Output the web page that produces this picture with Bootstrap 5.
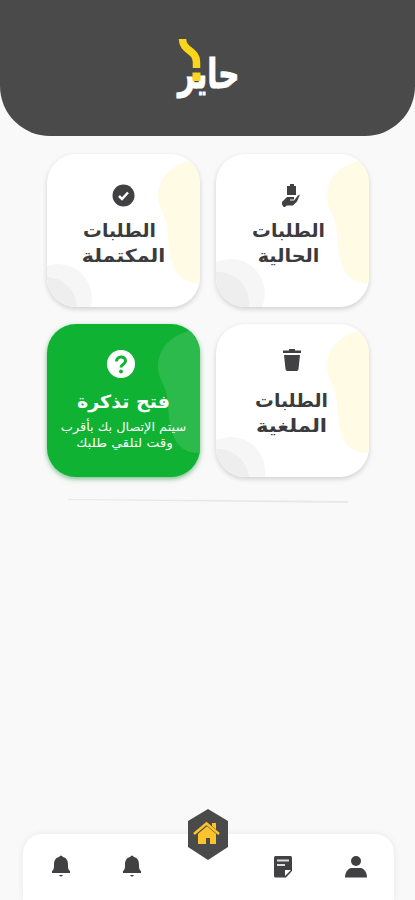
<!DOCTYPE html>
<html lang="ar" dir="rtl">
<head>
<meta charset="utf-8">
<meta name="viewport" content="width=device-width, initial-scale=1">
<title>حاير</title>
<link href="https://cdn.jsdelivr.net/npm/bootstrap@5.3.0/dist/css/bootstrap.min.css" rel="stylesheet">
<style>
body{background:#f9f9f9;color:#3b3b3d;font-family:"DejaVu Sans","Noto Sans",sans-serif;height:900px}
svg{display:block}
.app-top{height:136px;background:#4a4a4a;border-radius:0 0 50px 50px;padding-top:14px}
.tiles{width:322px;display:grid;grid-template-columns:153px 153px;gap:17px 16px;margin-top:18px}
.tile{height:153px;border-radius:29px;background:#fff;overflow:hidden;box-shadow:0 2px 5px rgba(0,0,0,.17)}
.tile-green{background:#0fb233;color:#fff;box-shadow:0 2px 5px rgba(15,140,45,.55)}
.tile-art{inset:0}
.tile-icon{height:64px;padding-top:30px}
.icon-help{padding:26px 4px 0 0;direction:ltr}
.line{display:block;white-space:nowrap;font-weight:700;font-size:18px;line-height:25px}
.sub{font-weight:400;font-size:12px;line-height:16px}
.title-green{line-height:31px;margin:-2px 0 2px}
.w-a{transform:translateX(-4px) scaleX(1.04)}
.w-b{transform:translateX(-4px) scaleX(1.07)}
.w-c{transform:translateX(-4px) scaleX(1.04)}
.w-d{transform:scaleX(1.14)}
.w-e{transform:translateX(-1px) scaleX(1.04)}
.w-f{transform:translateX(-1px) scaleX(1.17)}
.w-g{transform:scaleX(1.06)}
.w-h{transform:scaleX(1.07)}
.w-i{transform:translateX(1px) scaleX(1.13)}
.rule{width:280px;height:5px;margin-top:21px}
.dock{width:371px;height:66px;border-radius:19px 19px 0 0;background:#fff;box-shadow:0 0 7px rgba(0,0,0,.08);padding:0 25px;margin-left:2px}
.dock-item{width:26px;margin-top:21px}
.gap-note{margin-right:47px}
.gap-home{margin-right:41px}
.gap-bell{margin-right:45px}
.dock-home{width:42px;margin-top:-26px}
</style>
<script src="https://cdn.jsdelivr.net/npm/bootstrap@5.3.0/dist/js/bootstrap.bundle.min.js"></script>
</head>
<body class="d-flex flex-column align-items-center overflow-hidden">
<header class="app-top w-100 d-flex justify-content-center">
<svg width="90" height="115" viewBox="163 14 90 115">
<text x="178" y="88" direction="ltr" font-size="41" font-weight="700" fill="#fff" stroke="#fff" stroke-width="1" textLength="61.500" lengthAdjust="spacingAndGlyphs">حاير</text>
<path d="M182.500 39C182.500 51 196.500 50 196.500 62V68" fill="none" stroke="#fbd51c" stroke-width="7.500"/>
<path d="M192 68h9v4.500h-9z" fill="#4a4a4a"/><path d="M192.500 72.500h8v8.500h-8z" fill="#fbd51c"/>
</svg>
</header>
<main class="tiles">
<a class="tile position-relative text-reset text-decoration-none text-center">
<svg class="tile-art position-absolute" width="153" height="153"><path d="M153 6C129 6 111 22 111 42c0 15 9 18 10 38 1 30 8 50 32 49z" fill="#fffbe5"/><circle cx="15" cy="139" r="34" fill="#f6f6f6"/><circle cx="2" cy="149" r="31" fill="#eee"/></svg>
<div class="tile-icon position-relative d-flex justify-content-center"><svg width="22" height="23" viewBox="0 0 22 23" fill="#414143"><path d="M6 2h3V0h4v2h2v9H6zM1 18l5-5h7v2.500H9v1h4l4-5 2-1-3 7-4 4H6l-3 2-2-3z"/></svg></div>
<span class="line w-a">الطلبات</span><span class="line w-b">الحالية</span>
</a>
<a class="tile position-relative text-reset text-decoration-none text-center">
<svg class="tile-art position-absolute" width="153" height="153"><path d="M153 6C129 6 111 22 111 42c0 15 9 18 10 38 1 30 8 50 32 49z" fill="#fffbe5"/><circle cx="11" cy="144" r="34" fill="#f6f6f6"/><circle cx="-1" cy="154" r="31" fill="#eee"/></svg>
<div class="tile-icon position-relative d-flex justify-content-center"><svg width="23" height="23" viewBox="0 0 23 23"><circle cx="11.500" cy="11.500" r="11" fill="#414143"/><path d="m7 12 3 3 6-6.500" fill="none" stroke="#fff" stroke-width="2.500"/></svg></div>
<span class="line w-c">الطلبات</span><span class="line w-d">المكتملة</span>
</a>
<a class="tile position-relative text-reset text-decoration-none text-center">
<svg class="tile-art position-absolute" width="153" height="153"><path d="M153 6C129 6 111 22 111 42c0 15 9 18 10 38 1 30 8 50 32 49z" fill="#fffbe5"/><circle cx="15" cy="147" r="34" fill="#f6f6f6"/><circle cx="2" cy="156" r="31" fill="#eee"/></svg>
<div class="tile-icon position-relative d-flex justify-content-center pt-4"><svg width="20" height="24" viewBox="-1 0 20 24" fill="#414143"><path d="M0 2.500h6V1h6v1.500h6V5H0zM1 7h16l-1.500 14q0 2-2 2h-9q-2 0-2-2z"/></svg></div>
<span class="line w-e">الطلبات</span><span class="line w-f">الملغية</span>
</a>
<a class="tile tile-green position-relative text-decoration-none text-center">
<svg class="tile-art position-absolute" width="153" height="153"><path d="M153 6C129 6 111 22 111 42c0 15 9 18 10 38 1 30 8 50 32 49z" fill="#2bba4b"/></svg>
<div class="tile-icon icon-help position-relative d-flex justify-content-center"><svg width="28" height="28" viewBox="0 0 28 28"><circle cx="14" cy="14" r="14" fill="#fff"/><path d="M9.500 11.500c0-6 9-6 9-.5 0 3.500-4.500 3-4.500 6.500" fill="none" stroke="#0fb233" stroke-width="3"/><circle cx="14" cy="21.500" r="1.900" fill="#0fb233"/></svg></div>
<span class="line title-green w-g">فتح تذكرة</span><span class="line sub w-h">سيتم الإتصال بك بأقرب</span><span class="line sub w-i">وقت لتلقي طلبك</span>
</a>
</main>
<svg class="rule" viewBox="0 0 280 5"><path d="M0 1 280 3v2L0 2z" fill="#e8e8e8"/></svg>
<nav class="dock d-flex mt-auto" aria-label="القائمة">
<a class="dock-item"><svg width="26" height="24" viewBox="0 0 26 24" fill="#414143"><circle cx="13" cy="6" r="5"/><path d="M2 22.500c0-6 4-9.500 6-9.500h10c2 0 6 3.500 6 9.500z"/></svg></a>
<a class="dock-item gap-note"><svg width="26" height="24" viewBox="0 0 26 24"><path d="M5.500 1h15q1.500 0 1.500 1.500V16l-6 6.500H5.500Q4 22.500 4 21V2.500Q4 1 5.500 1z" fill="#414143"/><path d="M7 5.500h12M7 10h8" stroke="#ddd" stroke-width="2.200"/><path d="M15 21v-6h6z" fill="#fff"/></svg></a>
<a class="dock-home gap-home"><svg width="42" height="52" viewBox="0 0 42 52"><path d="M21 1 41 13v26L21 52 1 39V13z" fill="#4a4a4a"/><path d="m20 17 9 8v11h-6v-6h-4v6h-8V25zM25 15h4v8l-4-3z" fill="#fbc42d"/><path d="m7 27 13-11 13 11" fill="none" stroke="#4a4a4a" stroke-width="3.500"/><path d="m7 26 12.500-10.500L32 26" fill="none" stroke="#fbc42d" stroke-width="2.500"/></svg></a>
<a class="dock-item gap-home"><svg width="26" height="24" viewBox="1 0 26 24" fill="#414143"><path d="M11 2q2-3 4 0c4 1 5 4 5 8 0 5 1 5 2 6v2H4v-2c1-1 2-1 2-6 0-4 1-7 5-8zM11 20h4q-2 3-4 0z"/></svg></a>
<a class="dock-item gap-bell"><svg width="26" height="24" viewBox="1 0 26 24" fill="#414143"><path d="M11 2q2-3 4 0c4 1 5 4 5 8 0 5 1 5 2 6v2H4v-2c1-1 2-1 2-6 0-4 1-7 5-8zM11 20h4q-2 3-4 0z"/></svg></a>
</nav>
</body>
</html>
